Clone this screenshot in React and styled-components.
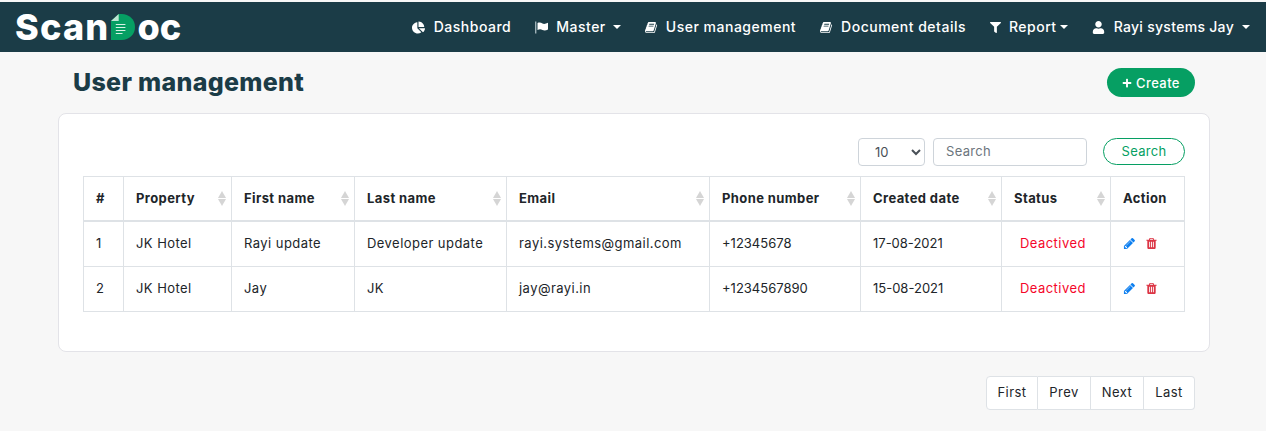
import React from 'react'
import styled, { createGlobalStyle } from 'styled-components'
import { FaChartPie, FaFilter, FaUser, FaPlus } from 'react-icons/fa'

const GlobalStyle = createGlobalStyle`
    html, body { margin: 0; padding: 0; }
    body {
        background: #f7f7f7;
        font-family: Inter, "Open Sans", sans-serif;
        font-size: 13px;
        letter-spacing: 0.45px;
        color: #212529;
    }
`

const users = [
    { id: 1, property: 'JK Hotel', first: 'Rayi update', last: 'Developer update', email: 'rayi.systems@gmail.com', phone: '+12345678', date: '17-08-2021' },
    { id: 2, property: 'JK Hotel', first: 'Jay', last: 'JK', email: 'jay@rayi.in', phone: '+1234567890', date: '15-08-2021' },
]

const columns = [
    { label: 'Property', width: 108 },
    { label: 'First name', width: 123 },
    { label: 'Last name', width: 152 },
    { label: 'Email', width: 203 },
    { label: 'Phone number', width: 151 },
    { label: 'Created date', width: 141 },
    { label: 'Status', width: 109 },
]

function LogoDoc() {
    return (
        <svg width="24" height="26" viewBox="0 0 25 26" preserveAspectRatio="none" aria-hidden="true">
            <path d="M0 7 L8 0 H11 C19 0 25 5.5 25 13 C25 20.5 19 26 11 26 H0 Z" fill="#069f63" />
            <path d="M0 7 L8 0 V7 Z" fill="#bfe6d3" />
            <path d="M5 10.5h10M5 13.5h10M5 16.5h10M5 19.5h7" stroke="#d8f3e6" strokeWidth="1.1" />
        </svg>
    )
}

function FlagIcon() {
    return (
        <svg width="13" height="13" viewBox="0 0 13 13" aria-hidden="true">
            <rect x="0" y="0.5" width="1.4" height="12" fill="#9fb2b8" />
            <path d="M2.5 2 C4.5 1 6 1.6 7.5 2.6 C9 3.2 11 2.8 13 1.8 V8.6 C11 9.6 9 9.8 7.5 9 C6 8.2 4.5 8 2.5 9 Z" fill="#fff" />
        </svg>
    )
}

function BookIcon() {
    return (
        <svg width="13" height="13" viewBox="0 0 1792 1792" fill="currentColor" aria-hidden="true">
            <path d="M1639 478q40 57 18 129l-275 906q-19 64-76.5 107.5t-122.5 43.5h-923q-77 0-148.5-53.5t-99.5-131.5q-24-67-2-127 0-4 3-27t4-37q1-8-3-21.5t-3-19.5q2-11 8-21t16.5-23.5 16.5-23.5q23-38 45-91.5t30-91.5q3-10 .5-30t-.5-28q3-11 17-28t17-23q21-36 42-92t25-90q1-9-2.5-32t.5-28q4-13 22-30.5t22-22.5q19-26 42.5-84.5t27.5-96.5q1-8-3-25.5t-2-26.5q2-8 9-18t18-23 17-21q8-12 16.5-30.5t15-35 16-36 19.5-32 26.5-23.5 36-11.5 47.5 5.5l-1 3q38-9 51-9h761q74 0 114 56t18 130l-274 906q-36 119-71.5 153.5t-128.5 34.5h-869q-27 0-38 15-11 16-1 43 24 70 144 70h923q29 0 56-15.5t35-41.5l300-987q7-22 5-57 38 15 59 43zm-1064 2q-4 13 2 22.5t20 9.5h608q13 0 25.5-9.5t16.5-22.5l21-64q4-13-2-22.5t-20-9.5h-608q-13 0-25.5 9.5t-16.5 22.5zm-83 256q-4 13 2 22.5t20 9.5h608q13 0 25.5-9.5t16.5-22.5l21-64q4-13-2-22.5t-20-9.5h-608q-13 0-25.5 9.5t-16.5 22.5z" />
        </svg>
    )
}

function PencilIcon() {
    return (
        <svg width="13" height="13" viewBox="0 0 1792 1792" fill="#0d7ff0" aria-hidden="true">
            <path d="M491 1536l91-91-235-235-91 91v107h128v128h107zm523-928q0-22-22-22-10 0-17 7l-542 542q-7 7-7 17 0 22 22 22 10 0 17-7l542-542q7-7 7-17zm-54-192l416 416-832 832h-416v-416zm683 96q0 53-37 90l-166 166-416-416 166-165q36-38 90-38 53 0 91 38l235 234q37 39 37 91z" />
        </svg>
    )
}

function TrashIcon() {
    return (
        <svg width="13" height="13" viewBox="0 0 1792 1792" fill="#dc3545" aria-hidden="true">
            <path d="M704 1376v-704q0-14-9-23t-23-9h-64q-14 0-23 9t-9 23v704q0 14 9 23t23 9h64q14 0 23-9t9-23zm256 0v-704q0-14-9-23t-23-9h-64q-14 0-23 9t-9 23v704q0 14 9 23t23 9h64q14 0 23-9t9-23zm256 0v-704q0-14-9-23t-23-9h-64q-14 0-23 9t-9 23v704q0 14 9 23t23 9h64q14 0 23-9t9-23zm-544-992h448l-48-117q-7-9-17-11h-317q-10 2-17 11zm928 32v64q0 14-9 23t-23 9h-96v948q0 83-47 143.5t-113 60.5h-832q-66 0-113-58.5t-47-141.5v-952h-96q-14 0-23-9t-9-23v-64q0-14 9-23t23-9h309l70-167q15-37 54-63t79-26h320q40 0 79 26t54 63l70 167h309q14 0 23 9t9 23z" />
        </svg>
    )
}

function App() {
    return (
        <>
            <GlobalStyle />
            <NavWrapper>
                <Brand>
                    <BrandHead>Scan</BrandHead>
                    <LogoDoc />
                    <BrandTail>oc</BrandTail>
                </Brand>
                <NavList>
                    <NavItem><FaChartPie />Dashboard</NavItem>
                    <NavItem $gap={8}><FlagIcon />Master<Caret /></NavItem>
                    <NavItem $gap={8}><BookIcon />User management</NavItem>
                    <NavItem $gap={8}><BookIcon />Document details</NavItem>
                    <NavItem $gap={8} $narrow><FaFilter />Report<Caret $tight /></NavItem>
                    <NavItem $compact><FaUser />Rayi systems Jay<Caret /></NavItem>
                </NavList>
            </NavWrapper>

            <Main>
                <PageHead>
                    <Title>User management</Title>
                    <CreateButton><FaPlus />Create</CreateButton>
                </PageHead>

                <Card>
                    <Filters>
                        <PageSize defaultValue="10">
                            <option>10</option>
                            <option>25</option>
                            <option>50</option>
                        </PageSize>
                        <SearchInput placeholder="Search" />
                        <SearchButton>Search</SearchButton>
                    </Filters>

                    <Table>
                        <colgroup>
                            <col style={{ width: 40 }} />
                            {columns.map(c => <col key={c.label} style={{ width: c.width }} />)}
                            <col style={{ width: 74 }} />
                        </colgroup>
                        <thead>
                            <tr>
                                <Th>#</Th>
                                {columns.map(c => (
                                    <Th key={c.label}>
                                        {c.label}
                                        <SortArrows />
                                    </Th>
                                ))}
                                <Th>Action</Th>
                            </tr>
                        </thead>
                        <tbody>
                            {users.map(u => (
                                <tr key={u.id}>
                                    <Td>{u.id}</Td>
                                    <Td>{u.property}</Td>
                                    <Td>{u.first}</Td>
                                    <Td>{u.last}</Td>
                                    <Td>{u.email}</Td>
                                    <Td $numeric>{u.phone}</Td>
                                    <Td $numeric>{u.date}</Td>
                                    <Td><Status>Deactived</Status></Td>
                                    <Td>
                                        <Actions>
                                            <PencilIcon />
                                            <TrashIcon />
                                        </Actions>
                                    </Td>
                                </tr>
                            ))}
                        </tbody>
                    </Table>
                </Card>

                <Pager>
                    <PageLink>First</PageLink>
                    <PageLink>Prev</PageLink>
                    <PageLink>Next</PageLink>
                    <PageLink>Last</PageLink>
                </Pager>
            </Main>
        </>
    )
}

const NavWrapper = styled.nav`
    display: flex;
    align-items: center;
    justify-content: space-between;
    height: 50px;
    margin-top: 2px;
    padding: 0 16px 0 15px;
    background: #1b3c47;
    color: #fff;
`

const Brand = styled.div`
    display: flex;
    align-items: center;
    gap: 2px;
    font-size: 36px;
    font-weight: 800;
    line-height: 1;
`

const BrandHead = styled.span`
    letter-spacing: 1.2px;
`

const BrandTail = styled.span`
    letter-spacing: 0;
`

const NavList = styled.div`
    display: flex;
    align-items: center;
    gap: 24px;
`

const NavItem = styled.div`
    display: flex;
    align-items: center;
    gap: ${props => props.$gap || 9}px;
    font-size: 14px;
    font-weight: 500;
    letter-spacing: ${props => (props.$compact ? '0.3px' : '0.5px')};
    line-height: 20px;
    white-space: nowrap;

    svg { font-size: ${props => (props.$narrow ? '11px' : '13px')}; }
`

const Caret = styled.i`
    width: 0;
    height: 0;
    margin-left: ${props => (props.$tight ? '-5px' : '-1px')};
    border-top: 4px solid #fff;
    border-left: 4px solid transparent;
    border-right: 4px solid transparent;
`

const Main = styled.main`
    padding: 16px 56px 0 58px;
`

const PageHead = styled.div`
    display: flex;
    align-items: center;
    justify-content: space-between;
    height: 29px;
    padding: 0 15px;
`

const Title = styled.h1`
    margin: 0 0 2px;
    font-size: 25px;
    font-weight: 800;
    letter-spacing: 0.3px;
    color: #1b3c47;
`

const CreateButton = styled.button`
    display: flex;
    align-items: center;
    justify-content: center;
    gap: 4px;
    width: 88px;
    height: 29px;
    border: 0;
    border-radius: 15px;
    background: #069f63;
    color: #fff;
    font: 500 13px Inter, sans-serif;
    letter-spacing: 0.4px;

    svg { font-size: 10px; }
`

const Card = styled.section`
    box-sizing: border-box;
    height: 239px;
    margin-top: 16px;
    padding: 24px 24px 0 24px;
    background: #fff;
    border: 1px solid #e3e3e8;
    border-radius: 8px;
`

const Filters = styled.div`
    display: flex;
    justify-content: flex-end;
    align-items: flex-start;
    height: 38px;
`

const PageSize = styled.select`
    box-sizing: border-box;
    width: 67px;
    height: 28px;
    padding-left: 12px;
    margin-right: 8px;
    background: #fff;
    border: 1px solid #ced4da;
    border-radius: 4px;
    color: #495057;
    font: 400 13px Inter, sans-serif;
`

const SearchInput = styled.input`
    box-sizing: border-box;
    width: 154px;
    height: 28px;
    padding: 0 12px 2px;
    margin-right: 16px;
    border: 1px solid #ced4da;
    border-radius: 4px;
    font: 400 13px Inter, sans-serif;
    letter-spacing: 0.3px;

    &::placeholder { color: #6c757d; }
`

const SearchButton = styled.button`
    width: 82px;
    height: 27px;
    padding: 0 0 2px;
    background: #fff;
    border: 1px solid #069f63;
    border-radius: 14px;
    color: #069f63;
    font: 400 13px Inter, sans-serif;
    letter-spacing: 0.3px;
`

const Table = styled.table`
    table-layout: fixed;
    width: 1101px;
    border-collapse: collapse;
`

const Th = styled.th`
    position: relative;
    height: 41px;
    padding: 0 12px 2px;
    border: 1px solid #dee2e6;
    border-bottom-width: 2px;
    text-align: left;
    font-size: 13px;
    font-weight: 700;
    letter-spacing: 0.4px;
    white-space: nowrap;
`

const SortArrows = styled.span`
    position: absolute;
    right: 5px;
    top: 14px;
    width: 0;
    height: 0;
    border-left: 4px solid transparent;
    border-right: 4px solid transparent;
    border-bottom: 7px solid #d5d5d5;

    &::after {
        content: '';
        position: absolute;
        left: -4px;
        top: 8px;
        border-left: 4px solid transparent;
        border-right: 4px solid transparent;
        border-top: 7px solid #d5d5d5;
    }
`

const Td = styled.td`
    height: 42px;
    padding: 0 12px 2px;
    border: 1px solid #dee2e6;
    font-size: 13px;
    letter-spacing: ${props => (props.$numeric ? '0' : '0.45px')};
    white-space: nowrap;
`

const Status = styled.span`
    display: block;
    padding-left: 6px;
    color: #f5062a;
`

const Actions = styled.div`
    display: flex;
    align-items: center;
    gap: 9px;
`

const Pager = styled.div`
    display: grid;
    grid-template-columns: 52px 53px 53px 51px;
    justify-content: end;
    margin: 24px 15px 0 0;
`

const PageLink = styled.div`
    display: flex;
    align-items: center;
    justify-content: center;
    box-sizing: border-box;
    height: 34px;
    padding-bottom: 2px;
    background: #fff;
    border: 1px solid #dee2e6;
    border-left-width: 0;
    font-size: 13px;

    &:first-child { border-left-width: 1px; border-radius: 4px 0 0 4px; }
    &:last-child { border-radius: 0 4px 4px 0; }
`

export default App
